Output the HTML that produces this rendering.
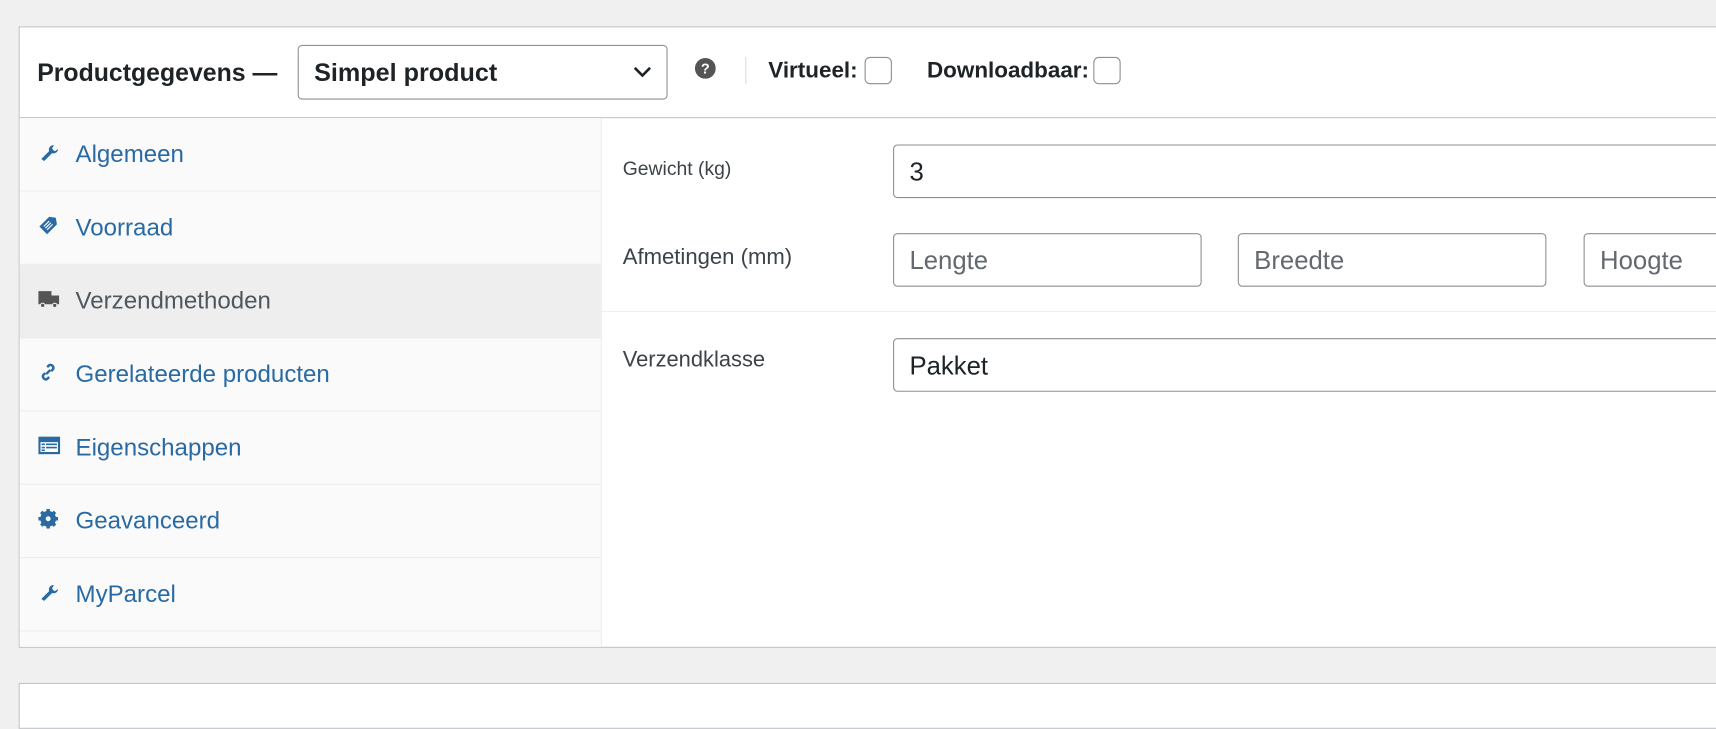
<!DOCTYPE html>
<html><head><style>
html,body{margin:0;padding:0;background:#f0f0f1;overflow:hidden;width:1716px;height:694px}
#w{position:absolute;left:0;top:0;width:1568px;height:634px;transform:scale(1.0944);transform-origin:0 0;font-family:"Liberation Sans",Arial,sans-serif}
.a{position:absolute}
.panel{left:17px;top:24px;width:1560px;height:566px;background:#fff;border:1px solid #c3c4c7}
.hdr{left:0;top:0;right:0;height:82px;border-bottom:1px solid #c3c4c7}
.side{left:0;top:83px;width:531px;height:483px;background:#fafafa;border-right:1px solid #eee}
.row{position:absolute;left:0;width:531px;height:66px;border-bottom:1px solid #eee;font-size:22px;color:#2a6aa3}
.row span{position:absolute;left:51px;top:20px}
.row svg{position:absolute;left:17px;top:22px}
.lbl{color:#3c434a}
.inp{border:1px solid #8c8f94;border-radius:4px;background:#fff;box-sizing:border-box;font-size:23.5px}
.cb{width:25px;height:25px;border:1px solid #8c8f94;border-radius:5px;box-sizing:border-box;background:#fff}
</style></head><body><div id="w">
<div class="a panel">
 <div class="a hdr">
  <div class="a" style="left:16px;top:28px;font-size:22.7px;font-weight:bold;color:#1d2327">Productgegevens —</div>
  <div class="a inp" style="left:254px;top:16px;width:338px;height:50px;border-color:#8c8f94">
   <div class="a" style="left:14px;top:11px;font-weight:bold;color:#1d2327;font-size:23px">Simpel product</div>
   <svg class="a" style="left:305px;top:18px" width="18" height="12" viewBox="0 0 18 12"><path d="M2 2l7 7 7-7" fill="none" stroke="#1d2327" stroke-width="2.4"/></svg>
  </div>
  <svg class="a" style="left:617px;top:28px" width="19" height="19" viewBox="0 0 20 20"><circle cx="10" cy="10" r="10" fill="#555"/><text x="10" y="15" text-anchor="middle" font-size="14" font-weight="bold" fill="#fff" font-family="Liberation Sans">?</text></svg>
  <div class="a" style="left:663px;top:27px;width:1px;height:25px;background:#ddd"></div>
  <div class="a" style="left:684px;top:28px;font-size:20.5px;font-weight:bold;color:#1d2327">Virtueel:</div>
  <div class="a cb" style="left:772px;top:27px"></div>
  <div class="a" style="left:829px;top:28px;font-size:20.5px;font-weight:bold;color:#1d2327">Downloadbaar:</div>
  <div class="a cb" style="left:981px;top:27px"></div>
 </div>
 <div class="a side">
  <div class="row" style="top:0"><svg width="18" height="18" viewBox="0 0 20 20"><path d="M3 17l8-8c-1-3 1-6 4-6l1 0-2 3 1 2 2 1 3-2c0 3-3 5-6 4l-8 8z" fill="#2a6aa3"/></svg><span>Algemeen</span></div>
  <div class="row" style="top:67px"><svg width="20" height="20" viewBox="0 0 20 20"><path d="M1 10l9-9 6 1 1 6-9 9z" fill="#2a6aa3"/><path d="M5 10l5-5M6.5 11.5l5-5M8 13l5-5" stroke="#fff" stroke-width="1"/></svg><span>Voorraad</span></div>
  <div class="row" style="top:134px;background:#eee;color:#50575e"><svg width="20" height="18" viewBox="0 0 20 18"><path d="M0 2h12v12H0zM12 6h7v8h-7z" fill="#555"/><circle cx="4" cy="15" r="2" fill="#555" stroke="#eee"/><circle cx="15" cy="15" r="2" fill="#555" stroke="#eee"/></svg><span>Verzendmethoden</span></div>
  <div class="row" style="top:201px"><svg width="18" height="18" viewBox="0 0 20 20"><path d="M8 12l4-4M9 5l2-2a3 3 0 014 4l-2 2M11 15l-2 2a3 3 0 01-4-4l2-2" stroke="#2a6aa3" stroke-width="2.5" fill="none"/></svg><span>Gerelateerde producten</span></div>
  <div class="row" style="top:268px"><svg width="20" height="18" viewBox="0 0 20 18"><rect x="0" y="1" width="20" height="16" fill="#2a6aa3"/><rect x="2" y="6" width="16" height="9" fill="#fff"/><path d="M3 8h3M3 11h3M3 13.5h3M7 8h10M7 11h10" stroke="#2a6aa3" stroke-width="1.5"/></svg><span>Eigenschappen</span></div>
  <div class="row" style="top:335px"><svg width="18" height="18" viewBox="0 0 20 20"><circle cx="10" cy="10" r="6" fill="none" stroke="#2a6aa3" stroke-width="4"/><path d="M10 0v20M0 10h20M3 3l14 14M17 3L3 17" stroke="#2a6aa3" stroke-width="3.5"/><circle cx="10" cy="10" r="2.5" fill="#fafafa"/></svg><span>Geavanceerd</span></div>
  <div class="row" style="top:402px"><svg width="18" height="18" viewBox="0 0 20 20"><path d="M3 17l8-8c-1-3 1-6 4-6l1 0-2 3 1 2 2 1 3-2c0 3-3 5-6 4l-8 8z" fill="#2a6aa3"/></svg><span>MyParcel</span></div>
 </div>
 <div class="a lbl" style="left:551px;top:119px;font-size:17.7px">Gewicht (kg)</div>
 <div class="a inp" style="left:798px;top:107px;width:780px;height:49px"><div class="a" style="left:14px;top:11px;color:#1d2327">3</div></div>
 <div class="a lbl" style="left:551px;top:199px;font-size:20.2px">Afmetingen (mm)</div>
 <div class="a inp" style="left:798px;top:188px;width:282px;height:49px"><div class="a" style="left:14px;top:11px;color:#646970">Lengte</div></div>
 <div class="a inp" style="left:1113px;top:188px;width:282px;height:49px"><div class="a" style="left:14px;top:11px;color:#646970">Breedte</div></div>
 <div class="a inp" style="left:1429px;top:188px;width:282px;height:49px"><div class="a" style="left:14px;top:11px;color:#646970">Hoogte</div></div>
 <div class="a" style="left:532px;top:259px;width:1040px;height:1px;background:#eee"></div>
 <div class="a lbl" style="left:551px;top:293px;font-size:20px">Verzendklasse</div>
 <div class="a inp" style="left:798px;top:284px;width:780px;height:49px"><div class="a" style="left:14px;top:11px;color:#1d2327">Pakket</div></div>
</div>
<div class="a" style="left:17px;top:624px;width:1560px;height:40px;background:#fff;border:1px solid #c3c4c7"></div>
</div></body></html>
